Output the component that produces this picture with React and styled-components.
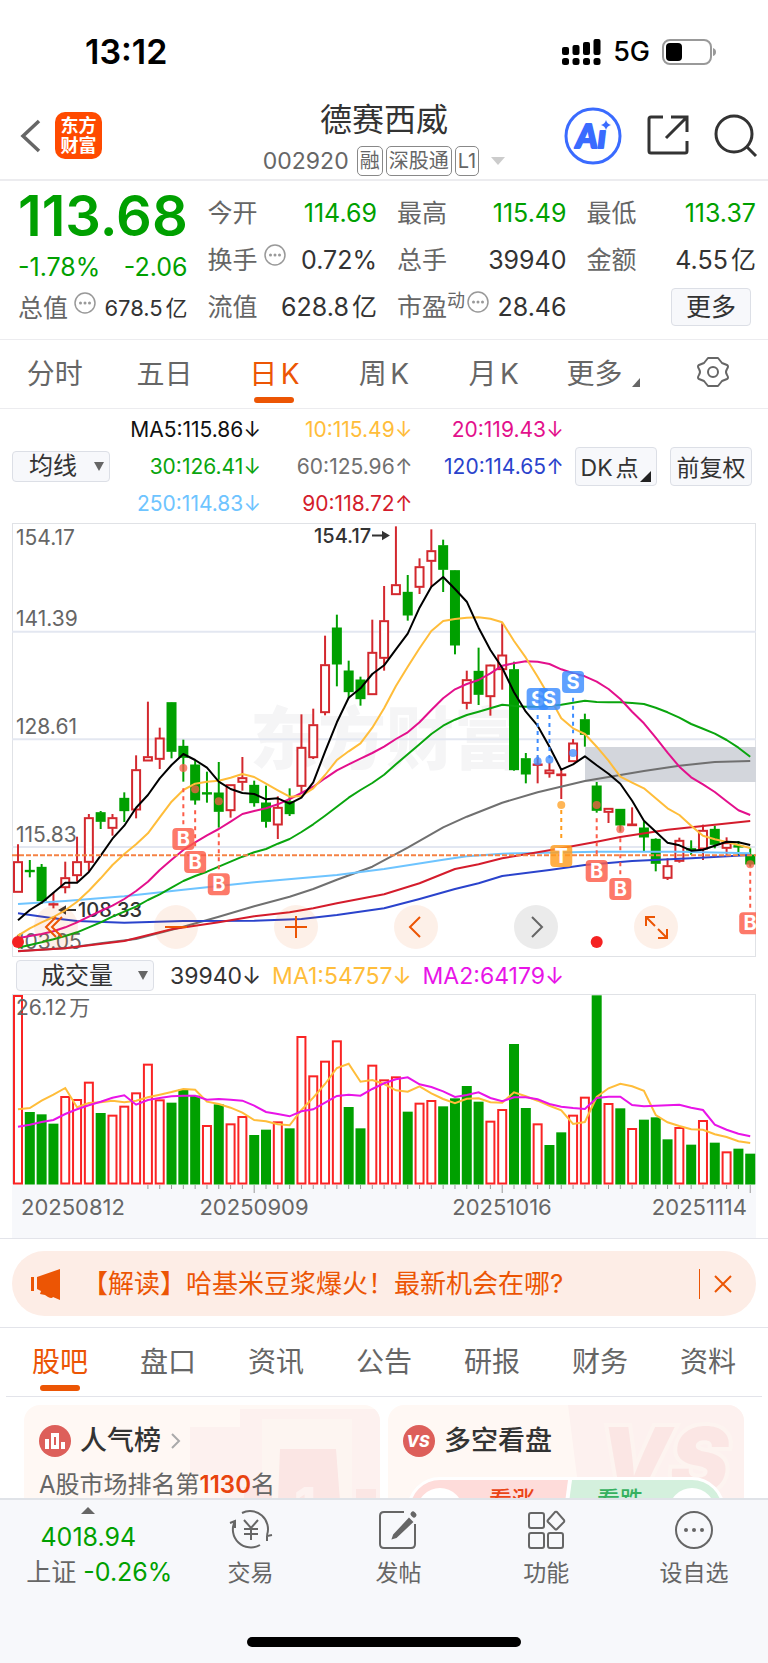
import React, { useState } from "react";
import styled, { createGlobalStyle } from "styled-components";

const GREEN = "#00a000";
const RED = "#d3282e";
const ORANGE = "#ec5504";

// x position of the n-th trading day
const dayX = (i) => 6 + i * 11.81;
const priceY = (v) => v / 3 - 8;
const volumeY = (v) => (v - 132) / 3;

// [rising, high, body top, body bottom, low]
const candles = [
  [1, 988, 1040, 1132, 1132], [0, 1035, 1066, 1069, 1087], [0, 1047, 1057, 1157, 1167],
  [1, 1132, 1166, 1170, 1180], [1, 1040, 1088, 1118, 1135], [1, 965, 1040, 1082, 1100],
  [1, 897, 908, 1042, 1068], [0, 888, 893, 919, 942], [1, 897, 908, 940, 962],
  [0, 832, 850, 887, 921], [1, 721, 764, 885, 910], [1, 560, 725, 738, 738],
  [1, 638, 669, 733, 762], [0, 562, 563, 709, 730], [0, 674, 694, 727, 800],
  [0, 737, 750, 855, 869], [0, 770, 833, 836, 863], [0, 741, 834, 889, 938],
  [1, 809, 809, 887, 908], [1, 726, 788, 802, 827], [0, 797, 811, 863, 875],
  [0, 812, 864, 919, 938], [1, 844, 877, 930, 972], [0, 820, 860, 896, 903],
  [1, 598, 697, 814, 835], [1, 581, 629, 728, 732], [1, 362, 449, 593, 601],
  [0, 299, 339, 447, 514], [0, 437, 468, 530, 550], [0, 485, 495, 551, 572],
  [1, 314, 412, 539, 539], [1, 213, 317, 430, 467], [1, 34, 209, 239, 239],
  [0, 180, 232, 300, 317], [1, 130, 155, 217, 237], [1, 43, 107, 139, 215],
  [0, 74, 92, 163, 231], [0, 166, 167, 390, 418], [1, 467, 494, 565, 583],
  [0, 398, 469, 538, 570], [1, 449, 450, 545, 602], [1, 325, 420, 464, 524],
  [0, 440, 464, 764, 767], [0, 714, 731, 777, 805], [1, 725, 747, 751, 805],
  [1, 743, 765, 776, 788], [1, 765, 777, 782, 852], [1, 672, 684, 740, 740],
  [0, 596, 614, 658, 695], [0, 801, 813, 886, 893], [1, 880, 880, 892, 924],
  [0, 883, 883, 930, 950], [1, 877, 927, 932, 932], [0, 919, 939, 966, 1008],
  [0, 970, 973, 1045, 1069], [1, 1030, 1052, 1090, 1095], [1, 968, 976, 1039, 1043],
  [0, 976, 1001, 1004, 1020], [1, 929, 946, 1002, 1035], [0, 932, 943, 988, 1000],
  [1, 967, 983, 1000, 1020], [0, 978, 992, 995, 1020], [0, 1000, 1020, 1047, 1055],
];

const volumes = [
  135, 486, 493, 521, 438, 447, 395, 489, 494, 467, 427, 341, 448, 458, 419, 437, 525, 463,
  520, 498, 555, 539, 514, 535, 258, 376, 332, 271, 471, 535, 344, 388, 379, 485, 458, 450,
  469, 445, 408, 455, 512, 477, 282, 474, 520, 585, 547, 494, 440, 136, 459, 475, 534, 509,
  502, 568, 531, 584, 510, 578, 604, 596, 611,
];
const volumeUp = [
  0, 4, 5, 6, 8, 9, 10, 11, 12, 16, 18, 19, 22, 24, 25, 26, 27, 30, 31, 32, 34, 35, 40, 41, 44,
  47, 48, 50, 52, 56, 58, 60,
];

const everyDay = (list) => list.map((v, i) => [i, v]);

const averages = [
  {
    color: "#707070",
    points: [[0, 1308], [4, 1300], [7, 1285], [10, 1272], [14, 1235], [17, 1205], [20, 1174], [23, 1145], [25, 1122], [27, 1094], [30, 1055], [33, 998], [36, 937], [38, 905], [41, 863], [44, 832], [48, 798], [53, 768], [56, 752], [59, 741], [62, 738]],
  },
  {
    color: "#6ec4ff",
    points: [[0, 1167], [4, 1158], [9, 1144], [14, 1124], [20, 1102], [27, 1080], [31, 1062], [36, 1034], [38, 1024], [41, 1016], [49, 1010], [56, 1010], [62, 1015]],
  },
  {
    color: "#2a43cc",
    points: [[0, 1195], [3, 1210], [5, 1218], [9, 1223], [14, 1218], [20, 1217], [24, 1212], [27, 1200], [31, 1180], [34, 1152], [37, 1122], [39, 1105], [41, 1083], [45, 1065], [48, 1050], [52, 1038], [57, 1030], [62, 1020]],
  },
  {
    color: "#d41c2c",
    points: [[0, 1309], [4, 1300], [9, 1278], [13, 1243], [17, 1222], [20, 1204], [23, 1192], [25, 1180], [27, 1165], [31, 1138], [34, 1105], [37, 1062], [39, 1048], [41, 1030], [46, 1000], [49, 980], [51, 966], [55, 944], [58, 933], [62, 918]],
  },
  {
    color: "#0aa50e",
    points: everyDay([1298, 1290, 1282, 1273, 1263, 1252, 1237, 1222, 1205, 1190, 1175, 1155, 1138, 1118, 1098, 1083, 1070, 1055, 1040, 1025, 1012, 1002, 986, 972, 951, 928, 902, 875, 848, 825, 804, 779, 748, 718, 688, 657, 632, 614, 600, 590, 580, 569, 573, 575, 575, 573, 569, 563, 557, 561, 562, 562, 564, 567, 578, 592, 608, 627, 641, 656, 675, 698, 725]),
  },
  {
    color: "#e3108c",
    points: everyDay([1270, 1263, 1257, 1249, 1237, 1222, 1205, 1188, 1172, 1152, 1128, 1100, 1065, 1034, 1005, 982, 961, 942, 920, 897, 888, 880, 868, 852, 834, 815, 790, 766, 748, 731, 714, 695, 672, 652, 622, 585, 550, 523, 507, 495, 475, 452, 445, 439, 440, 447, 463, 475, 484, 500, 522, 552, 590, 625, 668, 713, 755, 787, 808, 831, 859, 886, 900]),
  },
  {
    color: "#ffbd3a",
    points: everyDay([1262, 1240, 1222, 1206, 1186, 1160, 1127, 1090, 1050, 1017, 988, 955, 907, 860, 825, 806, 800, 797, 788, 777, 786, 806, 826, 845, 843, 820, 780, 735, 709, 685, 638, 580, 513, 455, 400, 348, 318, 312, 308, 307, 311, 322, 378, 428, 485, 545, 610, 640, 657, 695, 737, 785, 803, 820, 850, 880, 900, 932, 962, 973, 981, 990, 999]),
  },
  {
    color: "#000",
    points: everyDay([1216, 1185, 1163, 1133, 1103, 1103, 1071, 1022, 971, 932, 878, 840, 790, 750, 717, 735, 758, 800, 822, 834, 837, 853, 850, 866, 848, 802, 710, 622, 548, 520, 477, 451, 403, 356, 278, 215, 186, 222, 260, 338, 405, 458, 532, 590, 632, 695, 764, 748, 724, 751, 776, 806, 857, 917, 950, 983, 991, 1007, 1004, 992, 980, 982, 990]),
  },
];

const volumeAverages = [
  {
    color: "#ffbd3a",
    points: everyDay([478, 474, 452, 434, 414, 472, 459, 457, 452, 457, 452, 442, 434, 426, 417, 419, 455, 462, 473, 488, 510, 514, 523, 526, 480, 443, 402, 354, 341, 395, 390, 402, 421, 425, 409, 430, 447, 460, 446, 445, 457, 458, 427, 439, 452, 467, 481, 522, 516, 441, 415, 401, 409, 422, 495, 517, 528, 538, 539, 553, 561, 574, 579]),
  },
  {
    color: "#e814e8",
    points: everyDay([530, 524, 516, 510, 492, 478, 466, 455, 443, 436, 464, 450, 444, 439, 437, 437, 449, 447, 449, 452, 467, 486, 492, 499, 484, 478, 458, 438, 434, 437, 417, 400, 388, 382, 403, 411, 424, 441, 435, 427, 444, 454, 442, 442, 448, 462, 470, 474, 477, 444, 440, 440, 465, 469, 467, 466, 464, 473, 480, 524, 539, 551, 559]),
  },
];

const signals = [
  { kind: "B", day: 14, dot: 759, from: 820, to: 930, y: 972 },
  { kind: "B", day: 15, dot: 823, from: 886, to: 1005, y: 1041 },
  { kind: "B", day: 17, dot: 859, from: 955, to: 1065, y: 1108 },
  { kind: "B", day: 49, dot: 870, from: 910, to: 1030, y: 1068 },
  { kind: "B", day: 51, dot: 943, from: 970, to: 1080, y: 1122 },
  { kind: "B", day: 62, dot: 1048, from: 1070, to: 1180, y: 1225 },
  { kind: "S", day: 44, dot: 739, from: 600, to: 735, y: 552 },
  { kind: "S", day: 45, dot: 734, from: 600, to: 730, y: 552 },
  { kind: "S", day: 47, dot: 714, from: 548, to: 655, y: 501 },
  { kind: "T", day: 46, dot: 870, from: 885, to: 980, y: 1023 },
];
const signalColor = { B: "#fc5c48", S: "#3c8cff", T: "#ff9d1e" };

const priceLabels = [
  ["154.17", 90], ["141.39", 332], ["128.61", 656], ["115.83", 980], ["103.05", 1303],
];

const quotes = [
  { label: "今开", value: "114.69", down: true },
  { label: "最高", value: "115.49", down: true },
  { label: "最低", value: "113.37", down: true },
  { label: "换手", value: "0.72%", info: true },
  { label: "总手", value: "39940" },
  { label: "金额", value: "4.55亿" },
  { label: "流值", value: "628.8亿" },
  { label: "市盈", note: "动", value: "28.46", info: true },
];

const movingAverages = [
  ["MA5:115.86", "↓", "#111"], ["10:115.49", "↓", "#ffbd3a"], ["20:119.43", "↓", "#e3108c"],
  ["30:126.41", "↓", "#0aa50e"], ["60:125.96", "↑", "#707070"], ["120:114.65", "↑", "#2a43cc"],
  ["250:114.83", "↓", "#6ec4ff"], ["90:118.72", "↑", "#d41c2c"],
];

const toPoints = (points, scale) =>
  points.map(([i, v]) => `${dayX(i)},${scale(v).toFixed(1)}`).join(" ");

function PriceChart() {
  return (
    <Chart viewBox="0 0 744 434" role="img" aria-label="日K">
      <rect x="0.5" y="0.5" width="743" height="433" fill="#fff" stroke="#e0e2e6" />
      <text x="238" y="241" fontSize="68" fontWeight="800" fill="#f5f5f6">东方财富</text>
      {[350, 673, 996].map((v) => (
        <line key={v} x1="0" x2="744" y1={priceY(v)} y2={priceY(v)} stroke="#e3e7f1" strokeWidth="2" />
      ))}
      <rect x="573" y="224" width="171" height="35" fill="#d3d6dc" />
      {candles.map(([up, high, top, bottom, low], i) => (
        <g key={i} stroke={up ? RED : GREEN} strokeWidth="2">
          <line x1={dayX(i)} x2={dayX(i)} y1={priceY(high)} y2={priceY(top)} />
          <line x1={dayX(i)} x2={dayX(i)} y1={priceY(bottom)} y2={priceY(low)} />
          <rect
            x={dayX(i) - 4}
            y={priceY(top) + 0.5}
            width="8"
            height={Math.max(priceY(bottom) - priceY(top) - 1, 0.4)}
            fill={up ? "#fff" : GREEN}
          />
        </g>
      ))}
      {priceLabels.map(([text, v]) => (
        <text key={text} x="4" y={priceY(v)} fontSize="21" fill="#666">{text}</text>
      ))}
      <g fontSize="20" fontWeight="500" fill="#333">
        <text x="302" y="20">154.17</text>
        <text x="66" y="394">108.33</text>
      </g>
      <g stroke="#333" strokeWidth="2" fill="#333">
        <path d="M360 12.500H375M371 9.500L376 12.500L371 15.500Z" />
        <path d="M64 387H49M53 384L48 387L53 390Z" />
      </g>
      {averages.map(({ color, points }) => (
        <polyline key={color} points={toPoints(points, priceY)} fill="none" stroke={color} strokeWidth="2" strokeLinejoin="round" />
      ))}
      <line x1="0" x2="744" y1={priceY(1021)} y2={priceY(1021)} stroke="#f58244" strokeWidth="2" strokeDasharray="5 2" />
      {signals.map(({ kind, day, dot, from, to, y }) => (
        <g key={kind + day} fill={signalColor[kind]}>
          <line x1={dayX(day)} x2={dayX(day)} y1={priceY(from)} y2={priceY(to)} stroke={signalColor[kind]} strokeWidth="2" strokeDasharray="4 4" />
          <circle cx={dayX(day)} cy={priceY(dot)} r="4" opacity="0.75" />
          <rect x={dayX(day) - 11} y={priceY(y) - 11} width="22" height="22" rx="4" opacity="0.82" />
          <text x={dayX(day)} y={priceY(y) + 7} fontSize="20" fontWeight="700" textAnchor="middle" fill="#fff">{kind}</text>
        </g>
      ))}
      <circle cx="6" cy="419" r="6" fill="#f52222" />
      <circle cx={dayX(49)} cy="419" r="6" fill="#f52222" />
    </Chart>
  );
}

function VolumeChart() {
  return (
    <Chart viewBox="0 0 744 244" role="img" aria-label="成交量">
      <rect x="0.5" y="0.5" width="743" height="190" fill="#fff" stroke="#e0e2e6" />
      <rect y="190" width="744" height="54" fill="#f7f8fb" />
      {volumes.map((v, i) => {
        const up = volumeUp.includes(i);
        return (
          <rect
            key={i}
            x={dayX(i) - 4}
            y={volumeY(v) + 1}
            width="8"
            height={188.500 - volumeY(v)}
            fill={up ? "#fff" : GREEN}
            stroke={up ? "#fa2424" : GREEN}
            strokeWidth="2"
          />
        );
      })}
      {volumeAverages.map(({ color, points }) => (
        <polyline key={color} points={toPoints(points, volumeY)} fill="none" stroke={color} strokeWidth="2" />
      ))}
      {volumes.map((v, i) =>
        i > 10 ? (
          <line key={i} x1={dayX(i)} x2={dayX(i)} y1="191" y2={[20, 41, 62].includes(i) ? 199 : 195} stroke="#999" />
        ) : null
      )}
      <text x="4" y="21" fontSize="21" fill="#666">26.12万</text>
      <g fontSize="22" fill="#666">
        <text x="9" y="221">20250812</text>
        <text x="242" y="221" textAnchor="middle">20250909</text>
        <text x="490" y="221" textAnchor="middle">20251016</text>
        <text x="735" y="221" textAnchor="end">20251114</text>
      </g>
    </Chart>
  );
}

function InfoIcon() {
  return (
    <svg width="22" height="22" viewBox="0 0 22 22" fill="none" stroke="#999" strokeWidth="1.5">
      <circle cx="11" cy="11" r="10" />
      <g fill="#999" stroke="none">
        <circle cx="6.500" cy="11" r="1.500" />
        <circle cx="11" cy="11" r="1.500" />
        <circle cx="15.500" cy="11" r="1.500" />
      </g>
    </svg>
  );
}

function Dropdown({ label, width }) {
  return (
    <SelectBox $width={width}>
      <select aria-label={label} defaultValue={label}>
        <option>{label}</option>
      </select>
    </SelectBox>
  );
}

const chartTools = [
  { name: "向前", d: "M22 12L12 22L22 32M28 12L18 22L28 32" },
  { name: "缩小", d: "M11 22H33" },
  { name: "放大", d: "M11 22H33M22 11V33" },
  { name: "左移", d: "M26 12L16 22L26 32" },
  { name: "右移", d: "M18 12L28 22L18 32", muted: true },
  { name: "全屏", d: "M12 21V12H21M12 12L21 21M24 24L33 33M33 24V33H24" },
];

const bottomItems = [
  {
    name: "交易",
    icon: (
      <>
        <path d="M13 5A18 18 0 0 1 38 27M31 37A18 18 0 0 1 6 13" />
        <path d="M1 15L6 13V20M43 27L38 28V33" />
        <path d="M15 12L22 20L29 12M22 20V32M15 21H29M15 26H29" />
      </>
    ),
  },
  {
    name: "发帖",
    icon: (
      <>
        <path d="M28 4H8Q4 4 4 8V36Q4 40 8 40H35Q39 40 39 36V16" />
        <path d="M33 11L36 14L20 29L17 30L18 27Z" fill="#666" />
        <path d="M37 6L38 7" strokeWidth="5" strokeLinecap="round" />
      </>
    ),
  },
  {
    name: "功能",
    icon: (
      <>
        <rect x="5" y="5" width="15" height="15" rx="2" />
        <rect x="5" y="25" width="15" height="15" rx="2" />
        <rect x="24" y="25" width="15" height="15" rx="2" />
        <path d="M31 4Q32 3.500 33 4L40 12Q40.500 13 40 14L33 21Q32 22 31 21L24 14Q23 13 24 12Z" />
      </>
    ),
  },
  {
    name: "设自选",
    icon: (
      <>
        <circle cx="22" cy="22" r="18" />
        <g fill="#666" stroke="none">
          <circle cx="14" cy="22" r="2" />
          <circle cx="22" cy="22" r="2" />
          <circle cx="30" cy="22" r="2" />
        </g>
      </>
    ),
  },
];

function App() {
  const [period, setPeriod] = useState("日K");
  const [section, setSection] = useState("股吧");

  return (
    <Page>
      <GlobalStyle />
      <StatusBar>
        <Clock>13:12</Clock>
        <StatusIcons>
          <svg width="39" height="28" viewBox="0 0 39 28">
            {[8, 10, 13, 16].map((h, i) => (
              <g key={h}>
                <rect x={i * 10.500} y={17 - h} width="7" height={h} rx="2" />
                <rect x={i * 10.500} y="20" width="7" height="7" rx="2.500" />
              </g>
            ))}
          </svg>
          <Network>5G</Network>
          <svg width="54" height="26" viewBox="0 0 54 26">
            <rect x="1" y="1" width="48" height="24" rx="7" fill="none" stroke="#999" strokeWidth="2" />
            <rect x="4" y="4" width="16" height="18" rx="4" />
            <path d="M51 9Q54 10 54 13Q54 16 51 17Z" fill="#999" />
          </svg>
        </StatusIcons>
      </StatusBar>

      <Header>
        <HeaderSide>
          <IconButton aria-label="返回">
            <svg width="22" height="34" viewBox="0 0 22 34" fill="none" stroke="#666" strokeWidth="3.500">
              <path d="M19 2L3 17L19 32" />
            </svg>
          </IconButton>
          <Logo>
            <span>东方</span>
            <span>财富</span>
          </Logo>
        </HeaderSide>
        <HeaderTitle>
          <h1>德赛西威</h1>
          <StockCode>
            <Code>002920</Code>
            <Badge>融</Badge>
            <Badge>深股通</Badge>
            <Badge>L1</Badge>
            <Triangle />
          </StockCode>
        </HeaderTitle>
        <HeaderSide $end>
          <IconButton aria-label="Ai">
            <svg width="58" height="58" viewBox="0 0 58 58">
              <circle cx="29" cy="29" r="27" fill="none" stroke="#3a6bff" strokeWidth="3" />
              <text x="12" y="41" fontSize="33" fontFamily="Lato, sans-serif" fontWeight="900" fontStyle="italic" fill="#3a6bff" stroke="#3a6bff" strokeWidth="2" strokeLinejoin="round">Aı</text>
              <path d="M42 13Q43 17 47 18Q43 19 42 23Q41 19 37 18Q41 17 42 13Z" fill="#3a6bff" />
            </svg>
          </IconButton>
          <IconButton aria-label="分享">
            <svg width="42" height="42" viewBox="0 0 42 42" fill="none" stroke="#333" strokeWidth="3">
              <path d="M16 2H4Q2 2 2 4V36Q2 38 4 38H38Q40 38 40 36V26M24 2H40V17M39 3L19 23" />
            </svg>
          </IconButton>
          <IconButton aria-label="搜索">
            <svg width="44" height="44" viewBox="0 0 44 44" fill="none" stroke="#333" strokeWidth="3">
              <circle cx="20" cy="20" r="18" />
              <path d="M32 32L42 42" />
            </svg>
          </IconButton>
        </HeaderSide>
      </Header>

      <Quote>
        <QuoteMain>
          <Price>113.68</Price>
          <Change>
            <span>-1.78%</span>
            <span>-2.06</span>
          </Change>
          <Cell $small>
            <dt>总值</dt>
            <InfoIcon />
            <dd>678.5亿</dd>
          </Cell>
        </QuoteMain>
        <QuoteGrid>
          {quotes.map(({ label, value, note, info, down }) => (
            <Cell key={label} $down={down}>
              <dt>
                {label}
                {note && <sup>{note}</sup>}
              </dt>
              {info && <InfoIcon />}
              <dd>{value}</dd>
            </Cell>
          ))}
          <MoreButton>更多</MoreButton>
        </QuoteGrid>
      </Quote>

      <Tabs>
        {["分时", "五日", "日K", "周K", "月K", "更多"].map((name) => (
          <Tab key={name} $active={name === period} onClick={() => setPeriod(name)}>
            {name}
            {name === "更多" && <Corner />}
          </Tab>
        ))}
        <Tab aria-label="设置">
          <svg width="34" height="32" viewBox="0 0 34 32" fill="none" stroke="#666" strokeWidth="2">
            <path d="M12 2H22L26 7L31 9Q33 10 31 13Q29 16 31 19Q33 22 31 23L26 25L22 30H12L8 25L3 23Q1 22 3 19Q5 16 3 13Q1 10 3 9L8 7Z" strokeLinejoin="round" />
            <circle cx="17" cy="16" r="5" />
          </svg>
        </Tab>
      </Tabs>

      <Indicators>
        <Dropdown label="均线" width={98} />
        <Legend>
          {movingAverages.map(([text, arrow, color]) => (
            <LegendItem key={text} $color={color}>
              {text}
              <Arrow>{arrow}</Arrow>
            </LegendItem>
          ))}
        </Legend>
        <IndicatorButtons>
          <SmallButton>
            DK点
            <Corner $dark />
          </SmallButton>
          <SmallButton>前复权</SmallButton>
        </IndicatorButtons>
      </Indicators>

      <ChartArea>
        <PriceChart />
        <ChartTools>
          {chartTools.map(({ name, d, muted }) => (
            <ToolButton key={name} aria-label={name} $muted={muted}>
              <svg width="44" height="44" viewBox="0 0 44 44" fill="none" stroke="currentColor" strokeWidth="2">
                <path d={d} />
              </svg>
            </ToolButton>
          ))}
        </ChartTools>
      </ChartArea>

      <VolumeBar>
        <Dropdown label="成交量" width={138} />
        <VolumeItem $color="#333">39940<Arrow>↓</Arrow></VolumeItem>
        <VolumeItem $color="#ffbd3a">MA1:54757<Arrow>↓</Arrow></VolumeItem>
        <VolumeItem $color="#e814e8">MA2:64179<Arrow>↓</Arrow></VolumeItem>
      </VolumeBar>
      <ChartArea>
        <VolumeChart />
      </ChartArea>

      <NoticeArea>
        <Notice>
          <svg width="32" height="38" viewBox="0 0 32 38" fill={ORANGE}>
            <rect x="1" y="12" width="3" height="14" />
            <path d="M7 12L30 4V35L23 32Q22 34 18 32L15 30L10 29L11 26L7 24Z" />
          </svg>
          <NoticeLink href="#notice">【解读】哈基米豆浆爆火！最新机会在哪?</NoticeLink>
          <CloseButton aria-label="关闭">
            <svg width="18" height="24" viewBox="0 0 18 24" fill="none" stroke={ORANGE} strokeWidth="2">
              <path d="M1 4L17 20M17 4L1 20" />
            </svg>
          </CloseButton>
        </Notice>
      </NoticeArea>

      <Tabs $inset>
        {["股吧", "盘口", "资讯", "公告", "研报", "财务", "资料"].map((name) => (
          <Tab key={name} $active={name === section} onClick={() => setSection(name)}>
            {name}
          </Tab>
        ))}
      </Tabs>

      <Cards>
        <Card>
          <CardArt viewBox="0 0 200 96">
            <path d="M10 22H60V4H200V96H40V70H10Z" fill="#fdf1ef" />
            <path d="M82 14H172V96H82Z" fill="#fdf5f1" />
            <path d="M100 44H156L160 96H98Z" fill="#fbe6e4" />
            <path d="M64 96V82H92V96ZM176 96V84H196V96Z" fill="#fbe6e4" />
            <text x="114" y="118" fontSize="50" fontWeight="800" fill="#fdf2f0">1</text>
          </CardArt>
          <CardTitle>
            <svg width="32" height="32" viewBox="0 0 32 32">
              <circle cx="16" cy="16" r="16" fill="#dd5f5a" />
              <path d="M6 14H10V24H6ZM12 8H20V24H12ZM22 17H26V24H22Z" fill="#fff" />
              <path d="M16 12V20" stroke="#dd5f5a" strokeWidth="2" />
            </svg>
            <h2>人气榜</h2>
            <svg width="12" height="18" viewBox="0 0 12 18" fill="none" stroke="#aaa" strokeWidth="2">
              <path d="M2 2L9 9L2 16" />
            </svg>
          </CardTitle>
          <Rank>
            A股市场排名第<strong>1130</strong>名
          </Rank>
        </Card>
        <Card>
          <CardArt viewBox="0 0 200 96">
            <path d="M24 0H200V96H36Z" fill="#fdf1ef" />
            <text x="56" y="86" fontSize="88" fontWeight="900" fontStyle="italic" fill="#fbe6e4" stroke="#fdf4f0" strokeWidth="8" paintOrder="stroke">VS</text>
          </CardArt>
          <CardTitle>
            <svg width="32" height="32" viewBox="0 0 32 32">
              <circle cx="16" cy="16" r="16" fill="#dd5f5a" />
              <text x="15" y="22" fontSize="16" fontWeight="800" fontStyle="italic" fill="#fff" textAnchor="middle">VS</text>
            </svg>
            <h2>多空看盘</h2>
          </CardTitle>
          <Votes>
            <Vote $up>看涨</Vote>
            <Vote>看跌</Vote>
          </Votes>
        </Card>
      </Cards>

      <BottomBar>
        <IndexLink href="#index">
          <Triangle $up />
          <IndexValue>4018.94</IndexValue>
          <IndexName>
            上证 <em>-0.26%</em>
          </IndexName>
        </IndexLink>
        {bottomItems.map(({ name, icon }) => (
          <BottomItem key={name}>
            <svg width="44" height="44" viewBox="0 0 44 44" fill="none" stroke="#666" strokeWidth="2">
              {icon}
            </svg>
            {name}
          </BottomItem>
        ))}
        <HomeIndicator />
      </BottomBar>
    </Page>
  );
}

export default App;

const GlobalStyle = createGlobalStyle`
  * {
    box-sizing: border-box;
  }
  body {
    margin: 0;
    background: #fff;
    color: #333;
    font-family: Inter, "Noto Sans CJK SC", sans-serif;
    text-autospace: normal;
  }
  button, select {
    font-family: inherit;
    color: inherit;
    border: none;
    background: none;
    padding: 0;
    cursor: pointer;
    text-autospace: normal;
  }
  h1, h2, dl, dd, dt, p {
    margin: 0;
    font-weight: 400;
  }
  a {
    text-decoration: none;
    color: inherit;
  }
  svg {
    display: block;
    flex: none;
  }
`;

const Page = styled.div`
  display: flex;
  flex-direction: column;
  height: 100vh;
  > * {
    flex: none;
  }
`;

const StatusBar = styled.div`
  display: flex;
  align-items: center;
  justify-content: space-between;
  height: 88px;
  padding: 15px 52px 0 85px;
  color: #000;
`;

const Clock = styled.span`
  font-size: 34px;
  font-weight: 600;
`;

const StatusIcons = styled.div`
  display: flex;
  align-items: center;
  gap: 12px;
`;

const Network = styled.span`
  font-size: 27px;
  font-weight: 500;
`;

const Header = styled.header`
  display: grid;
  grid-template-columns: 1fr auto 1fr;
  align-items: center;
  height: 93px;
  padding: 4px 10px 0;
  border-bottom: 2px solid #ececef;
`;

const HeaderSide = styled.div`
  display: flex;
  align-items: center;
  gap: ${({ $end }) => ($end ? "25px" : "13px")};
  padding-left: ${({ $end }) => ($end ? "0" : "10px")};
  justify-content: ${({ $end }) => ($end ? "flex-end" : "flex-start")};
`;

const IconButton = styled.button`
  display: flex;
`;

const Logo = styled.div`
  display: flex;
  flex-direction: column;
  align-items: center;
  justify-content: center;
  width: 47px;
  height: 47px;
  border-radius: 10px;
  background: #ff4a00;
  color: #fff;
  font-size: 18px;
  font-weight: 700;
  line-height: 20px;
`;

const HeaderTitle = styled.div`
  display: flex;
  flex-direction: column;
  align-items: center;
  gap: 6px;
  padding-top: 4px;
  h1 {
    font-size: 32px;
    line-height: 40px;
  }
`;

const StockCode = styled.div`
  display: flex;
  align-items: center;
  gap: 3px;
  color: #666;
`;

const Code = styled.span`
  margin-right: 5px;
  font-size: 23px;
`;

const Badge = styled.span`
  height: 30px;
  padding: 0 2px;
  border: 1px solid #888;
  border-radius: 5px;
  font-size: 20px;
  line-height: 28px;
`;

const Triangle = styled.i`
  width: 0;
  margin: ${({ $up }) => ($up ? "0" : "0 0 0 9px")};
  border: 7px solid transparent;
  border-width: ${({ $up }) => ($up ? "0 7px 7px" : "8px 7px 0")};
  border-top-color: #ccc;
  border-bottom-color: #666;
`;

const Quote = styled.section`
  display: grid;
  grid-template-columns: calc((100% - 60px) / 4) 1fr;
  column-gap: 20px;
  height: 159px;
  padding: 8px 12px 0 18px;
  border-bottom: 1px solid #ececef;
`;

const QuoteMain = styled.div`
  display: flex;
  flex-direction: column;
  color: ${GREEN};
`;

const Price = styled.div`
  font-size: 56px;
  font-weight: 600;
  line-height: 54px;
`;

const Change = styled.div`
  display: flex;
  justify-content: space-between;
  font-size: 25px;
  line-height: 48px;
`;

const QuoteGrid = styled.div`
  display: grid;
  grid-template-columns: repeat(3, 1fr);
  grid-auto-rows: 47px;
  column-gap: 20px;
`;

const Cell = styled.dl`
  display: flex;
  align-items: center;
  line-height: 34px;
  font-size: 25px;
  dt {
    color: #666;
  }
  sup {
    font-size: 18px;
    line-height: 18px;
  }
  svg {
    margin: 0 0 10px 6px;
  }
  dt:has(sup) + svg {
    margin-left: 2px;
  }
  dd {
    flex: 1;
    text-align: right;
    white-space: nowrap;
    font-size: ${({ $small }) => ($small ? "22px" : "25px")};
    color: ${({ $down }) => ($down ? GREEN : "#333")};
  }
`;

const MoreButton = styled.button`
  justify-self: end;
  align-self: center;
  width: 80px;
  height: 38px;
  margin-right: 5px;
  border: 1px solid #dcdfe6;
  border-radius: 4px;
  background: #f7f8fb;
  font-size: 25px;
  line-height: 34px;
`;

const Tabs = styled.nav`
  display: flex;
  height: 69px;
  margin: ${({ $inset }) => ($inset ? "0 6px" : "0")};
  border-bottom: 1px solid ${({ $inset }) => ($inset ? "#e3e4ea" : "#ececef")};
`;

const Tab = styled.button`
  position: relative;
  flex: 1;
  display: flex;
  align-items: center;
  justify-content: center;
  padding-bottom: 4px;
  color: ${({ $active }) => ($active ? ORANGE : "#666")};
  font-size: 28px;
  &::after {
    content: "";
    display: ${({ $active }) => ($active ? "block" : "none")};
    position: absolute;
    bottom: 5px;
    width: 40px;
    height: 6px;
    border-radius: 3px;
    background: ${ORANGE};
  }
`;

const Corner = styled.i`
  align-self: flex-end;
  width: 0;
  margin: ${({ $dark }) => ($dark ? "0 0 3px 2px" : "0 0 17px 10px")};
  border-style: solid;
  border-width: ${({ $dark }) => ($dark ? "0 0 11px 11px" : "0 0 9px 8px")};
  border-color: transparent transparent ${({ $dark }) => ($dark ? "#222" : "#666")};
`;

const Indicators = styled.section`
  display: flex;
  align-items: center;
  height: 114px;
  padding: 0 16px 0 12px;
`;

const SelectBox = styled.div`
  position: relative;
  width: ${({ $width }) => $width}px;
  select {
    appearance: none;
    width: 100%;
    height: 31px;
    padding: 0 24px 0 8px;
    border: 1px solid #dcdfe6;
    border-radius: 4px;
    background: #f7f8fb;
    font-size: 24px;
    line-height: 28px;
    text-align: center;
    text-align-last: center;
  }
  &::after {
    content: "";
    position: absolute;
    top: 11px;
    right: 6px;
    border: solid transparent;
    border-width: 9px 5px 0;
    border-top-color: #666;
    pointer-events: none;
  }
`;

const Legend = styled.div`
  flex: 1;
  display: grid;
  grid-template-columns: repeat(3, 1fr);
  grid-auto-rows: 37px;
`;

const LegendItem = styled.span`
  display: flex;
  align-items: center;
  justify-content: flex-end;
  color: ${({ $color }) => $color};
  font-size: 21px;
  white-space: nowrap;
`;

const Arrow = styled.span`
  width: 18px;
  text-align: center;
`;

const IndicatorButtons = styled.div`
  display: flex;
  gap: 13px;
  margin-left: 11px;
`;

const SmallButton = styled.button`
  display: flex;
  align-items: center;
  justify-content: center;
  width: 82px;
  height: 39px;
  border: 1px solid #dcdfe6;
  border-radius: 4px;
  background: #f7f8fb;
  font-size: 23px;
  white-space: nowrap;
`;

const ChartArea = styled.section`
  position: relative;
  margin: 0 12px;
`;

const Chart = styled.svg`
  width: 100%;
  height: auto;
`;

// floating controls above the candles
const ChartTools = styled.div`
  position: absolute;
  left: 22px;
  right: 78px;
  bottom: 8px;
  display: flex;
  justify-content: space-between;
`;

const ToolButton = styled.button`
  display: flex;
  border-radius: 50%;
  color: ${({ $muted }) => ($muted ? "#666" : ORANGE)};
  background: ${({ $muted }) => ($muted ? "#ebebeb" : "rgba(236, 85, 4, 0.09)")};
`;

const VolumeBar = styled.div`
  display: flex;
  align-items: center;
  gap: 12px;
  height: 37px;
  padding-left: 16px;
`;

const VolumeItem = styled(LegendItem)`
  font-size: 23px;
  ${SelectBox} + & {
    margin-left: 4px;
  }
`;

const NoticeArea = styled.section`
  padding: 12px 12px 11px;
  border: solid #e3e4ea;
  border-width: 1px 0;
`;

const Notice = styled.div`
  display: flex;
  align-items: center;
  height: 65px;
  padding: 0 24px 0 18px;
  border-radius: 33px;
  background: #fdede6;
  color: ${ORANGE};
`;

const NoticeLink = styled.a`
  flex: 1;
  margin-left: 20px;
  font-size: 26px;
  line-height: 36px;
`;

const CloseButton = styled.button`
  display: flex;
  padding: 3px 0 3px 14px;
  border-left: 1px solid ${ORANGE};
`;

const Cards = styled.section`
  && {
    flex: 1 0 0;
  }
  display: grid;
  grid-template-columns: 1fr 1fr;
  gap: 8px;
  padding: 8px 24px 0;
  overflow: hidden;
`;

const Card = styled.article`
  position: relative;
  padding: 18px 15px 0;
  border-radius: 16px 16px 0 0;
  background: #fff8f4;
  overflow: hidden;
`;

// pale backdrop behind the card text
const CardArt = styled.svg`
  position: absolute;
  top: 0;
  right: 0;
  width: 200px;
`;

const CardTitle = styled.div`
  position: relative;
  display: flex;
  align-items: center;
  gap: 9px;
  h2 {
    font-size: 27px;
    font-weight: 500;
    line-height: 36px;
  }
`;

const Rank = styled.p`
  position: relative;
  margin-top: 9px;
  color: #666;
  font-size: 24px;
  line-height: 34px;
  text-autospace: no-autospace;
  strong {
    color: #e8430e;
    font-weight: 600;
  }
`;

const Votes = styled.div`
  position: relative;
  display: flex;
  gap: 4px;
  margin: 18px 4px 0;
  border: 3px solid #fff;
  border-radius: 33px;
  background: #fff;
  overflow: hidden;
`;

const Vote = styled.button`
  flex: 1;
  display: flex;
  flex-direction: ${({ $up }) => ($up ? "row" : "row-reverse")};
  align-items: flex-start;
  justify-content: space-between;
  height: 60px;
  padding: ${({ $up }) => ($up ? "8px 33px 0 7px" : "8px 7px 0 33px")};
  background: ${({ $up }) => ($up ? "#fedcda" : "#d4f0dd")};
  color: ${({ $up }) => ($up ? "#ea4416" : "#36b060")};
  font-size: 23px;
  font-weight: 500;
  line-height: 24px;
  margin-left: ${({ $up }) => ($up ? "0" : "-8px")};
  clip-path: ${({ $up }) =>
    $up
      ? "polygon(0 0, 100% 0, calc(100% - 8px) 100%, 0 100%)"
      : "polygon(8px 0, 100% 0, 100% 100%, 0 100%)"};
  &::before {
    content: "";
    width: 46px;
    height: 46px;
    border-radius: 50%;
    background: #fff;
  }
`;

const BottomBar = styled.footer`
  position: relative;
  display: flex;
  height: 165px;
  border-top: 2px solid #e0e3e8;
  background: #f7f8fb;
`;

const IndexLink = styled.a`
  flex: 0 0 23%;
  display: flex;
  flex-direction: column;
  align-items: center;
  padding-top: 7px;
`;

const IndexValue = styled.span`
  margin-top: 6px;
  color: ${GREEN};
  font-size: 25px;
  line-height: 35px;
`;

const IndexName = styled.span`
  padding-left: 22px;
  color: #666;
  font-size: 25px;
  line-height: 35px;
  white-space: nowrap;
  em {
    color: ${GREEN};
    font-style: normal;
  }
`;

const BottomItem = styled.button`
  flex: 1;
  display: flex;
  flex-direction: column;
  align-items: center;
  align-self: flex-start;
  gap: 2px;
  padding-top: 8px;
  color: #666;
  font-size: 23px;
`;

const HomeIndicator = styled.div`
  position: absolute;
  bottom: 16px;
  left: calc(50% - 137px);
  width: 274px;
  height: 10px;
  border-radius: 5px;
  background: #000;
`;
